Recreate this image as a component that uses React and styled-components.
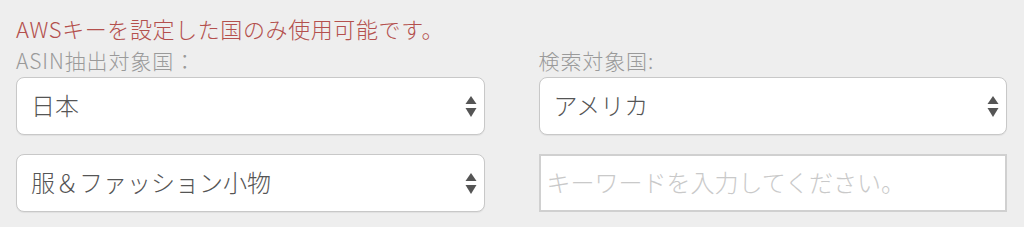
import React from 'react';
import styled, { createGlobalStyle } from 'styled-components';

const GlobalStyle = createGlobalStyle`
  html, body {
    margin: 0;
    padding: 0;
    background-color: #eeeeee;
  }
  body {
    font-family: 'Noto Sans CJK JP', 'Noto Sans', sans-serif;
  }
`;

function App() {
  return (
    <>
      <GlobalStyle />
      <Form>
        <Notice>AWSキーを設定した国のみ使用可能です。</Notice>
        <Grid>
          <Field>
            <Label>ASIN抽出対象国：</Label>
            <SelectBox value="日本" />
            <SelectBox value="服＆ファッション小物" />
          </Field>
          <Field>
            <Label>検索対象国:</Label>
            <SelectBox value="アメリカ" />
            <KeywordInput placeholder="キーワードを入力してください。" />
          </Field>
        </Grid>
      </Form>
    </>
  );
}

function SelectBox({ value }) {
  return (
    <SelectWrap>
      <Select defaultValue={value}>
        <option>{value}</option>
      </Select>
      <Arrows viewBox="0 0 12 21" xmlns="http://www.w3.org/2000/svg">
        <path d="M6 0 L11.5 8 L0.5 8 Z" fill="#555555" />
        <path d="M6 21 L11.5 12 L0.5 12 Z" fill="#555555" />
      </Arrows>
    </SelectWrap>
  );
}

const Form = styled.div`
  padding: 12px 17px 15px 16px;
`;

const Notice = styled.div`
  color: #b4504d;
  font-size: 22px;
  font-weight: 300;
  line-height: 32px;
  letter-spacing: 0.6px;
`;

const Grid = styled.div`
  display: grid;
  grid-template-columns: 1fr 1fr;
  column-gap: 54px;
`;

const Field = styled.div`
  display: flex;
  flex-direction: column;
  gap: 19px;
`;

const Label = styled.div`
  color: #9a9a9a;
  font-size: 21px;
  font-weight: 300;
  line-height: 32px;
  letter-spacing: 0.9px;
  margin-bottom: -18px;
`;

const SelectWrap = styled.div`
  position: relative;
  height: 58px;
`;

const Select = styled.select`
  appearance: none;
  -webkit-appearance: none;
  width: 100%;
  height: 100%;
  box-sizing: border-box;
  border: 1px solid #c8c8c8;
  border-radius: 8px;
  background-color: #ffffff;
  box-shadow: 0 1px 1px rgba(0, 0, 0, 0.06);
  padding: 0 40px 4px 14px;
  font-family: 'Noto Sans CJK JP', 'Noto Sans', sans-serif;
  font-size: 24px;
  font-weight: 300;
  color: #555555;
  outline: none;
`;

const Arrows = styled.svg`
  position: absolute;
  right: 8px;
  top: 19px;
  width: 12px;
  height: 21px;
  pointer-events: none;
`;

const KeywordInput = styled.input`
  height: 58px;
  box-sizing: border-box;
  border: 2px solid #d0d0d0;
  border-radius: 0;
  background-color: #ffffff;
  padding: 0 6px 4px 6px;
  font-family: 'Noto Sans CJK JP', 'Noto Sans', sans-serif;
  font-size: 24px;
  font-weight: 300;
  color: #555555;
  outline: none;

  &::placeholder {
    color: #c9c9c9;
  }
`;

export default App;
